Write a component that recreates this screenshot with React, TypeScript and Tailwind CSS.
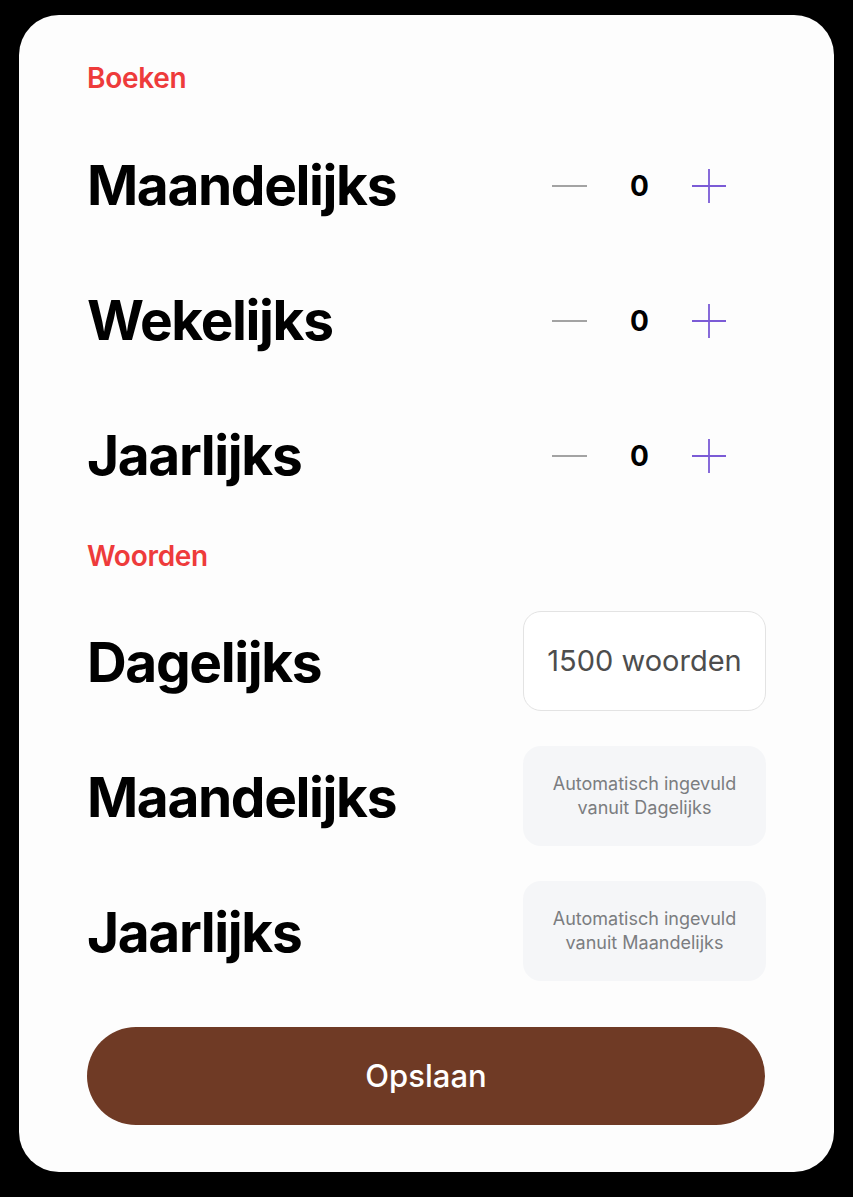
import React from "react";

const font = { fontFamily: "Inter, 'Noto Sans', 'Liberation Sans', sans-serif" };

function Stepper() {
  return (
    <div className="mr-[40px] flex w-[174px] items-center justify-between">
      <button className="flex h-[34px] w-[35px] items-center">
        <span className="block h-[2px] w-[35px] bg-[#a3a3a3]" />
      </button>
      <span className="text-[28px] font-bold leading-none text-black">0</span>
      <button className="relative flex h-[34px] w-[34px] items-center justify-center">
        <svg width="34" height="34" viewBox="0 0 34 34" fill="none">
          <path d="M17 0V34M0 17H34" stroke="#7b5bd6" strokeWidth="1.8" />
        </svg>
      </button>
    </div>
  );
}

function Row({ label, children }: { label: string; children: React.ReactNode }) {
  return (
    <div className="flex h-[135px] items-center justify-between">
      <span className="text-[55px] font-bold leading-none tracking-[-0.025em] text-black">
        {label}
      </span>
      {children}
    </div>
  );
}

function AutoBox({ lines }: { lines: [string, string] }) {
  return (
    <div className="flex h-[100px] w-[243px] flex-col items-center justify-center rounded-[18px] bg-[#f5f6f8] text-center text-[18px] leading-[24px] text-[#7b7d80]">
      <span>{lines[0]}</span>
      <span>{lines[1]}</span>
    </div>
  );
}

export default function App() {
  return (
    <div className="min-h-[1197px] w-full bg-black pl-[19px] pt-[15px]" style={font}>
      <div className="flex h-[1157px] w-[815px] flex-col rounded-[40px] bg-[#fdfdfd] px-[68px] pt-[46px]">
        <div className="flex h-[34px] items-center text-[28px] font-semibold tracking-[-0.01em] text-[#ee3b3b]">
          Boeken
        </div>
        <div className="mt-[23px]">
          <Row label="Maandelijks">
            <Stepper />
          </Row>
          <Row label="Wekelijks">
            <Stepper />
          </Row>
          <Row label="Jaarlijks">
            <Stepper />
          </Row>
        </div>
        <div className="mt-[16px] flex h-[34px] items-center text-[28px] font-semibold tracking-[-0.01em] text-[#ee3b3b]">
          Woorden
        </div>
        <div className="mt-[22px]">
          <Row label="Dagelijks">
            <div className="mb-[4px] flex h-[100px] w-[243px] items-center justify-center rounded-[18px] border border-[#e3e3e3] bg-white text-[29px] text-[#4d4d4d]">
              1500 woorden
            </div>
          </Row>
          <Row label="Maandelijks">
            <div className="mb-[4px]">
              <AutoBox lines={["Automatisch ingevuld", "vanuit Dagelijks"]} />
            </div>
          </Row>
          <Row label="Jaarlijks">
            <div className="mb-[4px]">
              <AutoBox lines={["Automatisch ingevuld", "vanuit Maandelijks"]} />
            </div>
          </Row>
        </div>
        <button className="mt-[27px] flex h-[98px] w-[678px] items-center justify-center rounded-full bg-[#6f3a25] text-[31px] font-medium text-white">
          Opslaan
        </button>
      </div>
    </div>
  );
}
